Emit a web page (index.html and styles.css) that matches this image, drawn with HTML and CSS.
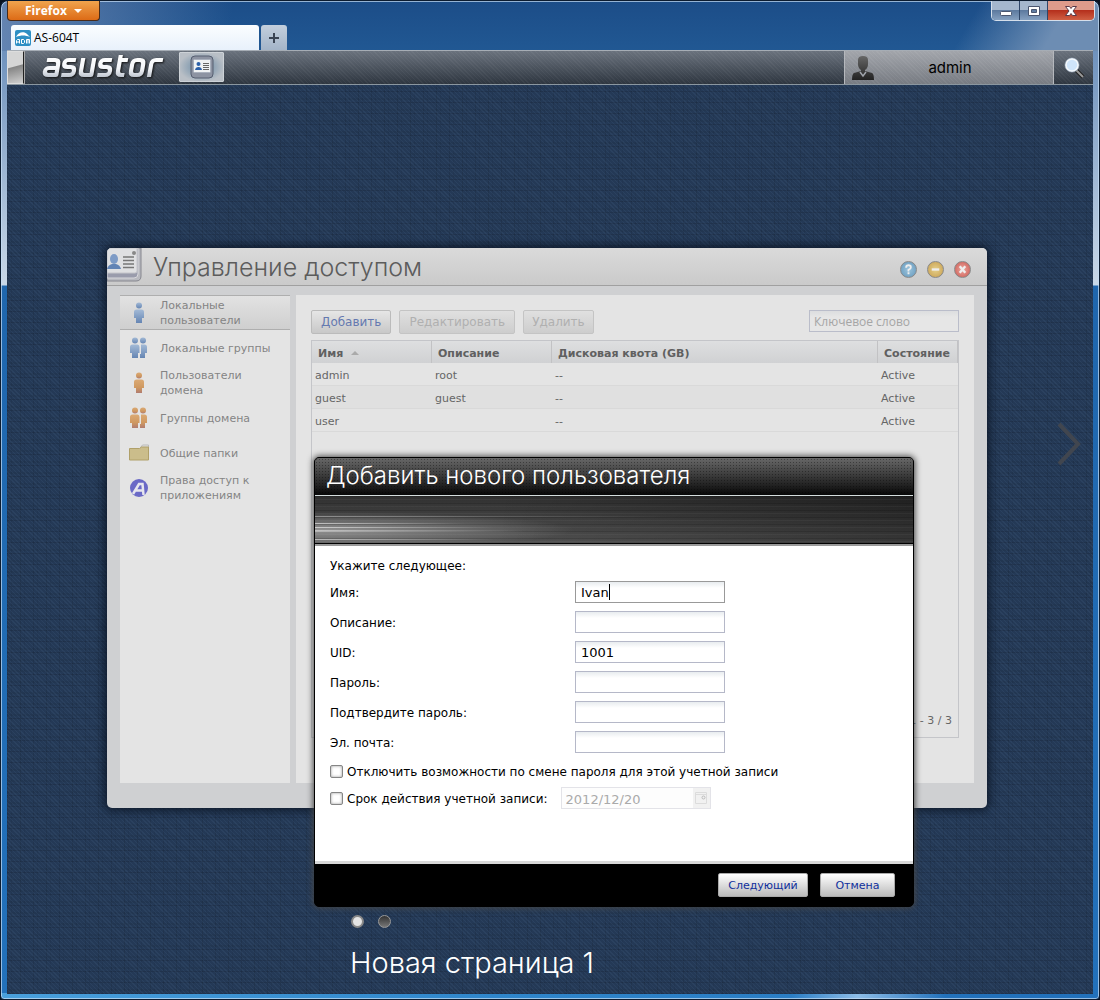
FILE: index.html
```
<!DOCTYPE html>
<html lang="ru">
<head>
<meta charset="utf-8">
<title>AS-604T</title>
<link rel="stylesheet" href="styles.css">
</head>
<body>
<div class="browser">
  <header class="titlebar">
    <button class="firefox" type="button">Firefox <span class="caret"></span></button>
    <div class="win-controls">
      <button type="button" class="wc" aria-label="Minimize"><svg width="14" height="14" viewBox="0 0 14 14"><rect x="1.500" y="7.500" width="11" height="4" rx="1" fill="#fff" stroke="#4a5670"/></svg></button>
      <button type="button" class="wc" aria-label="Restore"><svg width="14" height="14" viewBox="0 0 14 14"><path d="M1.500 2.500h11v9h-11zM4.500 5.500v3h5v-3z" fill="#fff" fill-rule="evenodd" stroke="#4a5670"/></svg></button>
      <button type="button" class="wc wc-close" aria-label="Close"><svg width="14" height="14" viewBox="0 0 14 14"><path d="M1.500 2.500h4l1.500 2 1.500-2h4l-3.500 4.500 3.500 4.500h-4l-1.500-2-1.500 2h-4l3.500-4.500z" fill="#fff" stroke="#5a3a48"/></svg></button>
    </div>
  </header>
  <nav class="tabs">
    <a class="tab" href="#">
      <svg width="16" height="16" viewBox="0 0 16 16"><rect width="16" height="16" rx="2" fill="#2d8fc4"/><path d="M1 7c2-5 8-6 11-3l3 3c-5-2-9-2-14 0z" fill="#fff"/><path d="M1.500 13.500v-3l1-1h2v4M1.500 12h3M6.500 9.500v4h2l1-1v-2l-1-1zM11.500 13.500v-4h3v4M13 9.500v4" fill="none" stroke="#fff"/></svg>
      <span>AS-604T</span>
    </a>
    <button class="newtab" type="button" aria-label="+"><svg width="12" height="12" viewBox="0 0 12 12"><path d="M6 1v10M1 6h10" stroke="#3a4453" stroke-width="2"/></svg></button>
  </nav>
  <main class="desktop">
    <div class="taskbar">
      <button class="show-desktop" type="button" aria-label="Desktop"></button>
      <div class="logo"><svg width="123" height="26" viewBox="0 0 123 26" role="img" aria-label="asustor">
        <defs><linearGradient id="metal" gradientUnits="userSpaceOnUse" x1="0" y1="0" x2="0" y2="24"><stop offset="0" stop-color="#fff"/><stop offset=".6" stop-color="#f4f6f9"/><stop offset="1" stop-color="#b9c1cc"/></linearGradient></defs>
        <g fill="none" stroke="url(#metal)" stroke-width="4.200" stroke-linejoin="round" transform="translate(5 -1) skewX(-10)">
          <path d="M2 6h8q4 0 4 4v11h-8q-4 0-4-3.500t4-3.500h8"/>
          <path d="M31 6h-7q-4 0-4 3.500t4 3.500h3q4 0 4 4t-4 4h-8"/>
          <path d="M38 4v13q0 4 4 4h7v-17"/>
          <path d="M67 6h-7q-4 0-4 3.500t4 3.500h3q4 0 4 4t-4 4h-8"/>
          <path d="M75 1v16q0 4 4 4h3M75 6h8"/>
          <path d="M93 6h2q4 0 4 4v7q0 4-4 4h-3q-4 0-4-4v-7q0-4 4-4z"/>
          <path d="M107 23v-13q0-4 4-4h7"/>
        </g></svg></div>
      <button class="task" type="button" aria-label="Управление доступом"><svg width="24" height="24" viewBox="0 0 24 24"><rect x="1" y="1" width="22" height="22" rx="4" fill="#8d93a2" stroke="#565e70"/><rect x="3.500" y="4.500" width="17" height="13" rx="1" fill="#f0f2f4" stroke="#a9b0bd"/><circle cx="8.500" cy="9" r="2" fill="#2b5fa8"/><path d="M5 15q.5-3 3.500-3t3.500 3z" fill="#2b5fa8"/><path d="M13 8.500h6M13 10.500h6M13 12.500h6M13 14.500h6" stroke="#666"/></svg></button>
      <div class="user"><svg width="24" height="26" viewBox="0 0 24 26"><defs><linearGradient id="man" x1="0" y1="0" x2="0" y2="1"><stop offset="0" stop-color="#666"/><stop offset="1" stop-color="#222"/></linearGradient></defs><path d="M7 5q0-4 5-4t5 4v4q0 4-3 6v1l7 2q2 1 2 7h-22q0-6 2-7l7-2v-1q-3-2-3-6z" fill="url(#man)"/><path d="M9 17l3 4 3-4" fill="none" stroke="#a0a4ab" stroke-width="1.500"/></svg><span>admin</span></div>
      <button class="search" type="button" aria-label="Поиск"><svg width="24" height="24" viewBox="0 0 24 24"><path d="M14 14l7 7" stroke="#222" stroke-width="4"/><path d="M14 14l7 7" stroke="#999" stroke-width="2"/><circle cx="10" cy="9" r="7" fill="#cfe5fb" stroke="#8b97a6"/><circle cx="10" cy="9" r="6" fill="none" stroke="#f4f8fc" stroke-width="1.500"/></svg></button>
    </div>

    <button class="next-page" type="button" aria-label="Следующая страница"><svg width="24" height="44" viewBox="0 0 24 44"><path d="M2 2l19 20-19 20" fill="none" stroke="#41464f" stroke-width="4"/></svg></button>

    <section class="window">
      <header class="win-head">
        <svg class="win-icon" width="36" height="36" viewBox="0 0 36 36"><path d="M0 0h34v28q0 5-5 5h-29z" fill="#b9bac0" stroke="#85868e"/><path d="M0 0h31v26q0 4-4 4h-27z" fill="#9a9cac" stroke="#d8d8dc"/><path d="M0 0h30v23q0 2-2 2h-28z" fill="#dfe0e2" stroke="#c4c5ca"/><ellipse cx="7" cy="11" rx="4" ry="5" fill="#7d9bc6"/><path d="M0 21q1-4 5-5h4q4 1 5 5z" fill="#6284b5"/><path d="M16 9h11M16 12.500h11M16 16h11M16 19.500h11" stroke="#777" stroke-width="1.500"/><circle cx="27" cy="5" r="2" fill="#888"/></svg>
        <h1>Управление доступом</h1>
        <div class="orbs">
          <button type="button" class="orb help" aria-label="Справка"><svg width="15" height="15" viewBox="0 0 16 16"><path d="M5.500 6q0-2.500 2.500-2.500t2.500 2-2.500 3v1.500M8 11v2" fill="none" stroke="#eee" stroke-width="2"/></svg></button>
          <button type="button" class="orb min" aria-label="Свернуть"><svg width="15" height="15" viewBox="0 0 16 16"><path d="M4 8h8" stroke="#eee" stroke-width="2.500"/></svg></button>
          <button type="button" class="orb close" aria-label="Закрыть"><svg width="15" height="15" viewBox="0 0 16 16"><path d="M5 4.500l6 7M11 4.500l-6 7" stroke="#eee" stroke-width="2.500"/></svg></button>
        </div>
      </header>
      <div class="win-body">
        <svg width="0" height="0" class="defs"><defs>
          <linearGradient id="blue" x1="0" y1="0" x2="0" y2="1"><stop offset="0" stop-color="#a3bad6"/><stop offset="1" stop-color="#6585b3"/></linearGradient>
          <linearGradient id="orange" x1="0" y1="0" x2="0" y2="1"><stop offset="0" stop-color="#dbaa74"/><stop offset=".6" stop-color="#cf9860"/><stop offset="1" stop-color="#b07c70"/></linearGradient>
          <g id="one"><circle cx="10" cy="3.500" r="3"/><path d="M5 10q0-2.500 2.500-2.500h5q2.500 0 2.500 2.500v6h-2v5h-6v-5h-2z"/></g>
          <g id="two"><circle cx="6" cy="3.500" r="3"/><circle cx="14" cy="3.500" r="3"/><path d="M1 10q0-2.500 2.500-2.500h5q2 0 2 2.500v6h-1.500v5h-6v-5h-2zM12 7.500h3.500q2.500 0 2.500 2.500v6h-2v5h-5v-4h1z"/></g>
        </defs></svg>
        <nav class="side">
          <a href="#" class="side-item active"><svg width="20" height="22" viewBox="0 0 20 22"><use href="#one" fill="url(#blue)"/></svg><span>Локальные пользователи</span></a>
          <a href="#" class="side-item"><svg width="20" height="22" viewBox="0 0 20 22"><use href="#two" fill="url(#blue)"/></svg><span>Локальные группы</span></a>
          <a href="#" class="side-item"><svg width="20" height="22" viewBox="0 0 20 22"><use href="#one" fill="url(#orange)"/></svg><span>Пользователи домена</span></a>
          <a href="#" class="side-item"><svg width="20" height="22" viewBox="0 0 20 22"><use href="#two" fill="url(#orange)"/></svg><span>Группы домена</span></a>
          <a href="#" class="side-item"><svg width="20" height="22" viewBox="0 0 20 22"><path d="M11.500 5.500l2-2.500h6v4h-8z" fill="#e0e0e0" stroke="#bbb"/><path d="M.5 6.500h10l2-1.500h7v13h-19z" fill="#cbbd8b" stroke="#b0a069"/></svg><span>Общие папки</span></a>
          <a href="#" class="side-item"><svg width="20" height="22" viewBox="0 0 20 22"><circle cx="10" cy="11" r="9" fill="#6a69c6"/><path d="M4 17l6-10h3.500l1 11M7 13.500h8" fill="none" stroke="#e6e6ee" stroke-width="2.500"/></svg><span>Права доступ к приложениям</span></a>
        </nav>
        <div class="content">
          <div class="toolbar">
            <button type="button" class="tbtn">Добавить</button>
            <button type="button" class="tbtn" disabled>Редактировать</button>
            <button type="button" class="tbtn" disabled>Удалить</button>
            <input class="filter" type="text" placeholder="Ключевое слово" aria-label="Ключевое слово">
          </div>
          <div class="grid">
            <table>
              <colgroup><col class="c-name"><col class="c-desc"><col><col class="c-state"></colgroup>
              <thead><tr><th>Имя <span class="sort"></span></th><th>Описание</th><th>Дисковая квота (GB)</th><th>Состояние</th></tr></thead>
              <tbody>
                <tr><td>admin</td><td>root</td><td>--</td><td>Active</td></tr>
                <tr><td>guest</td><td>guest</td><td>--</td><td>Active</td></tr>
                <tr><td>user</td><td></td><td>--</td><td>Active</td></tr>
              </tbody>
            </table>
            <div class="pager">1 - 3 / 3</div>
          </div>
        </div>
      </div>
    </section>

    <form class="dialog">
      <h2>Добавить нового пользователя</h2>
      <div class="banner"></div>
      <div class="fields">
        <p>Укажите следующее:</p>
        <div class="field"><label for="f1">Имя:</label><input id="f1" class="focus" type="text" value="Ivan"></div>
        <div class="field"><label for="f2">Описание:</label><input id="f2" type="text"></div>
        <div class="field"><label for="f3">UID:</label><input id="f3" type="text" value="1001"></div>
        <div class="field"><label for="f4">Пароль:</label><input id="f4" type="password"></div>
        <div class="field"><label for="f5">Подтвердите пароль:</label><input id="f5" type="password"></div>
        <div class="field"><label for="f6">Эл. почта:</label><input id="f6" type="text"></div>
        <div class="check"><input id="c1" type="checkbox"><label for="c1">Отключить возможности по смене пароля для этой учетной записи</label></div>
        <div class="check"><input id="c2" type="checkbox"><label for="c2">Срок действия учетной записи:</label>
          <span class="date"><input type="text" value="2012/12/20" disabled aria-label="Дата"><button type="button" disabled aria-label="Календарь"><svg width="12" height="12" viewBox="0 0 12 12"><path d="M.5 .5h11v11h-11zM.5 2.500h11" fill="none" stroke="#dcdcdc"/><circle cx="8.500" cy="5.500" r="1.500" fill="none" stroke="#bbb"/></svg></button></span></div>
      </div>
      <footer class="actions"><button type="button" class="next">Следующий</button><button type="button">Отмена</button></footer>
    </form>

    <div class="pages">
      <div class="dots"><button type="button" class="dot on" aria-label="Страница 1"></button><button type="button" class="dot" aria-label="Страница 2"></button></div>
      <div class="page-name">Новая страница 1</div>
    </div>
  </main>
</div>
</body>
</html>
```
FILE: styles.css
```
* { box-sizing: border-box; }
html, body { height: 100%; margin: 0; }
body { background: #08111f; font: 12px/15px "DejaVu Sans", Verdana, sans-serif; color: #000; }
button { font: inherit; padding: 0; margin: 0; }
svg { display: block; flex: none; }
h1, h2, p { margin: 0; font-weight: 400; }
a { color: inherit; text-decoration: none; }
.defs { position: absolute; }

.browser {
  display: flex; flex-direction: column; min-height: 100vh; padding: 0 6px 5px;
  border: 1px solid #0c1c30; border-radius: 8px 8px 4px 4px;
  background:
    linear-gradient(90deg, #49a0dc, #2f86cb 45%, #2a7dc4 72%, #8dbde8 78%, #2271bb 86%) bottom / 100% 6px no-repeat,
    linear-gradient(100deg, rgb(125 150 190 / 75%), transparent 230px) top / 100% 50px no-repeat,
    linear-gradient(120deg, transparent 87%, #6d8db3 95%) top / 100% 50px no-repeat,
    linear-gradient(#1c4d88, #215893) top / 100% 50px no-repeat,
    linear-gradient(#6f92bd 50px, #c9d8e8 284px, #1f66ad 285px, #2271bb);
  box-shadow: inset 0 0 0 1px rgb(200 222 245 / 70%);
}

.titlebar { display: flex; justify-content: space-between; height: 24px; margin-right: -2px; }
.firefox {
  width: 93px; height: 20px; color: #fff; border: 1px solid #4a2b18; border-top: 0; border-radius: 0 0 4px 4px;
  background: linear-gradient(#f0a44e, #dd6b16); font: bold 12px/18px "Open Sans", sans-serif;
}
.caret { display: inline-block; margin: 0 0 2px 4px; border: 4px solid transparent; border-top-color: #fff; border-bottom: 0; }
.win-controls { display: flex; height: 20px; border: 1px solid #d5dfeb; border-top: 0; border-radius: 0 0 5px 5px; overflow: hidden; }
.wc { display: grid; place-items: center; width: 28px; border: 0; border-right: 1px solid #2f4668; background: linear-gradient(#a5b7cd 45%, #5d7a9f 50%, #85a0c0); }
.wc-close { width: 46px; border-right: 0; background: linear-gradient(#dd9b8b 45%, #b5301d 50%, #d06044); }

.tabs { display: flex; gap: 2px; height: 25px; padding-left: 4px; }
.tab { display: flex; align-items: center; gap: 3px; width: 248px; padding-left: 4px; border-radius: 3px 3px 0 0; background: linear-gradient(#fbfdff, #e8f1fb); font: 12px/16px "Open Sans", sans-serif; }
.newtab { display: grid; place-items: center; width: 26px; border: 0; border-radius: 3px 3px 0 0; background: linear-gradient(#c3cfdd, #a3b4c8); }

.desktop {
  position: relative; flex: 1; display: flex; flex-direction: column;
  background:
    repeating-linear-gradient(45deg, rgb(120 160 200 / 8%) 0 1px, transparent 1px 3px),
    repeating-linear-gradient(0deg, rgb(0 0 0 / 12%) 0 1px, transparent 1px 3px, rgb(0 0 0 / 6%) 3px 5px, transparent 5px 11px),
    repeating-linear-gradient(90deg, rgb(0 0 0 / 9%) 0 1px, transparent 1px 4px, rgb(0 0 0 / 5%) 4px 5px, transparent 5px 13px),
    #243956;
}
.taskbar { display: flex; align-items: stretch; height: 35px; border-top: 1px solid #a6adb5; border-bottom: 1px solid #8b97a0; background: repeating-linear-gradient(45deg, rgb(255 255 255 / 4%) 0 1px, transparent 1px 3px), linear-gradient(#6a727d, #2e3640); }
.show-desktop { width: 17px; border: 1px solid #ddd; border-right-color: #222; background: linear-gradient(165deg, #d5d5d5 45%, #858585 48%, #d0d0d0); box-shadow: 1px 0 #aaa; }
.logo { display: flex; align-items: center; width: 155px; padding-left: 17px; filter: drop-shadow(1px 1px 1px #111); }
.task { display: grid; place-items: center; width: 45px; height: 30px; margin-top: 1px; border: 1px solid #cdd2d7; border-radius: 1px; background: radial-gradient(#7894ab 20%, #b9bfc6 75%); }
.user { display: flex; align-items: center; width: 210px; margin-left: auto; padding-left: 6px; border-left: 1px solid #b5b8bd; border-right: 1px solid #b5b8bd; background: repeating-linear-gradient(45deg, rgb(255 255 255 / 5%) 0 1px, transparent 1px 3px), linear-gradient(#a2a5ab, #777b82); font: 15px/18px Inter, sans-serif; }
.user span { flex: 1; text-align: center; padding-right: 28px; }
.search { display: grid; place-items: center; width: 39px; border: 0; background: none; }
.next-page { position: absolute; right: 12px; top: 372px; border: 0; background: none; }

.window { position: absolute; left: 100px; top: 198px; width: 880px; height: 560px; display: flex; flex-direction: column; border-radius: 5px; background: #cfd0d2; box-shadow: 0 0 10px 2px #0c1626; overflow: hidden; font-size: 11px; color: #666; }
.win-head { display: flex; height: 38px; border-bottom: 1px solid #a0a0a0; background: linear-gradient(#dadada, #cacaca); }
.win-head h1 { flex: 1; padding-left: 10px; font: 300 25px/38px Inter, sans-serif; color: #5c5c5c; }
.orbs { display: flex; align-items: center; gap: 10px; padding: 6px 16px 0 0; }
.orb { width: 17px; height: 17px; border: 1px solid #888; border-radius: 50%; }
.help { background: radial-gradient(#9cc4dc, #6497bb); }
.min { background: radial-gradient(#e5cf8a, #c79e4e); }
.close { background: radial-gradient(#ecaaa0, #ca5650); }
.win-body { flex: 1; display: flex; gap: 6px; padding: 9px 13px 25px; }
.side { width: 170px; background: #e4e4e4; color: #848484; }
.side-item { display: flex; align-items: center; gap: 11px; height: 35px; padding: 1px 10px 0 9px; line-height: 15px; }
.side-item.active { border-top: 1px solid #aeaeae; border-bottom: 1px solid #aeaeae; background: linear-gradient(#e2e2e2, #cfcfcf); }
.content { flex: 1; display: flex; flex-direction: column; padding: 15px 15px 45px; background: #e4e4e4; }
.toolbar { display: flex; gap: 8px; height: 30px; align-items: flex-start; }
.tbtn { height: 24px; padding: 0 8px; border: 1px solid #bbb; border-radius: 2px; background: linear-gradient(#e6e6e6, #c8c8c8); font-size: 12px; color: #6579b0; }
.tbtn:disabled { color: #b0b0b0; border-color: #c4c4c4; background: linear-gradient(#e0e0e0, #cdcdcd); }
.tbtn:nth-child(-n+2) { padding: 0 9px; }
.filter { width: 150px; height: 22px; margin-left: auto; padding: 0 4px; border: 1px solid #babdca; background: linear-gradient(#dcdddf, #e6e6e6 6px); font: 12px "Open Sans", sans-serif; }
.filter::placeholder { color: #a5a5a5; opacity: 1; }
.grid { flex: 1; display: flex; flex-direction: column; justify-content: space-between; border: 1px solid #c4c5c9; }
table { width: 100%; border-collapse: separate; border-spacing: 0; table-layout: fixed; }
.c-name, .c-desc { width: 120px; }
.c-state { width: 80px; }
th { height: 22px; padding: 2px 0 0 6px; text-align: left; white-space: nowrap; border-right: 1px solid #c2c2c4; background: linear-gradient(#dedfe0, #d0d1d3); color: #606060; }
td { height: 23px; padding: 2px 3px 0; border-bottom: 1px solid #d9d9d9; }
tr:nth-child(even) td { background: #e0e0e0; }
.sort { display: inline-block; margin: 0 0 2px 4px; border: 4px solid transparent; border-bottom-color: #aaa; border-top: 0; }
.pager { padding: 0 6px 9px; text-align: right; }

.dialog { position: absolute; left: 307px; top: 407px; width: 600px; height: 450px; display: flex; flex-direction: column; border: 1px solid #000; border-radius: 5px; background: #000; box-shadow: 0 0 6px 1px #444; overflow: hidden; }
.dialog h2 { height: 38px; padding-left: 11px; border-bottom: 1px solid #d5dede; color: #fff; font: 300 24px/36px Inter, sans-serif; background: radial-gradient(rgb(0 0 0 / 35%) 1px, transparent 1px) 0 0 / 3px 3px, linear-gradient(#686868, #080808); }
.banner { height: 50px; border-bottom: 2px solid #999; box-shadow: inset 0 -1px #000;
  background:
    linear-gradient(90deg, rgb(255 255 255 / 55%), transparent 25%) 0 27px / 100% 1px no-repeat,
    linear-gradient(90deg, rgb(255 255 255 / 55%), transparent 30%) 0 31px / 100% 1px no-repeat,
    linear-gradient(90deg, rgb(255 255 255 / 45%), transparent 35%) 0 34px / 100% 2px no-repeat,
    linear-gradient(90deg, rgb(255 255 255 / 35%), transparent 60%) 0 20px / 100% 1px no-repeat,
    linear-gradient(90deg, rgb(255 255 255 / 50%), transparent 30%) 0 43px / 100% 1px no-repeat,
    repeating-linear-gradient(rgb(0 0 0 / 14%) 0 1px, transparent 1px 3px, rgb(255 255 255 / 4%) 3px 4px, transparent 4px 7px),
    radial-gradient(ellipse 260px 18px at 0 34px, rgb(255 255 255 / 40%), transparent),
    linear-gradient(90deg, transparent 30%, rgb(0 0 0 / 35%)),
    linear-gradient(#303030, #545454);
}
.fields { flex: 1; padding: 11px 15px; border-bottom: 3px solid #d8d8d8; background: #fff; }
.fields p { height: 20px; line-height: 19px; }
.field { display: flex; align-items: center; height: 30px; }
.field label { width: 245px; padding-top: 2px; }
.field input { width: 150px; height: 22px; padding: 1px 5px 0; border: 1px solid #b5b8c8; background: linear-gradient(#e8ecef, #fff 6px); font: inherit; font-size: 13px; }
.field .focus { border-color: #999; background: linear-gradient(#000, #000) 33px 2px / 1px 16px no-repeat, linear-gradient(#e8ecef, #fff 6px); }
.check { display: flex; align-items: center; height: 27px; padding-top: 1px; }
.check label { padding-top: 2px; }
.check > input { width: 13px; height: 13px; margin: 0 4px 0 0; appearance: none; border: 1px solid #858686; border-radius: 2px; box-shadow: inset 0 0 3px #999; }
.date { display: flex; width: 150px; height: 22px; margin-left: 13px; border: 1px solid #e3e3e8; }
.date input { flex: 1; min-width: 0; padding: 2px 4px 0; border: 0; background: #fdfdfd; font: inherit; font-size: 13px; color: #aaa; }
.date button { display: grid; place-items: center; width: 17px; border: 0; background: #f1f1f1; }
.actions { display: flex; justify-content: flex-end; align-items: center; gap: 12px; height: 42px; padding-right: 18px; }
.actions button { width: 75px; height: 24px; border: 1px solid #aaa; border-radius: 2px; background: linear-gradient(#fff, #bbb); color: #10309c; font-size: 11px; }
.actions .next { width: 90px; }

.pages { margin: auto 0 0 343px; padding-bottom: 13px; color: #fff; }
.dots { display: flex; gap: 14px; padding-left: 1px; margin-bottom: 17px; }
.dot { width: 13px; height: 13px; border: 1px solid #999; border-radius: 50%; background: linear-gradient(#333, #777); }
.dot.on { background: #e4e4e4; border: 2px solid #888; }
.page-name { font: 300 29px/36px Inter, sans-serif; }
```
